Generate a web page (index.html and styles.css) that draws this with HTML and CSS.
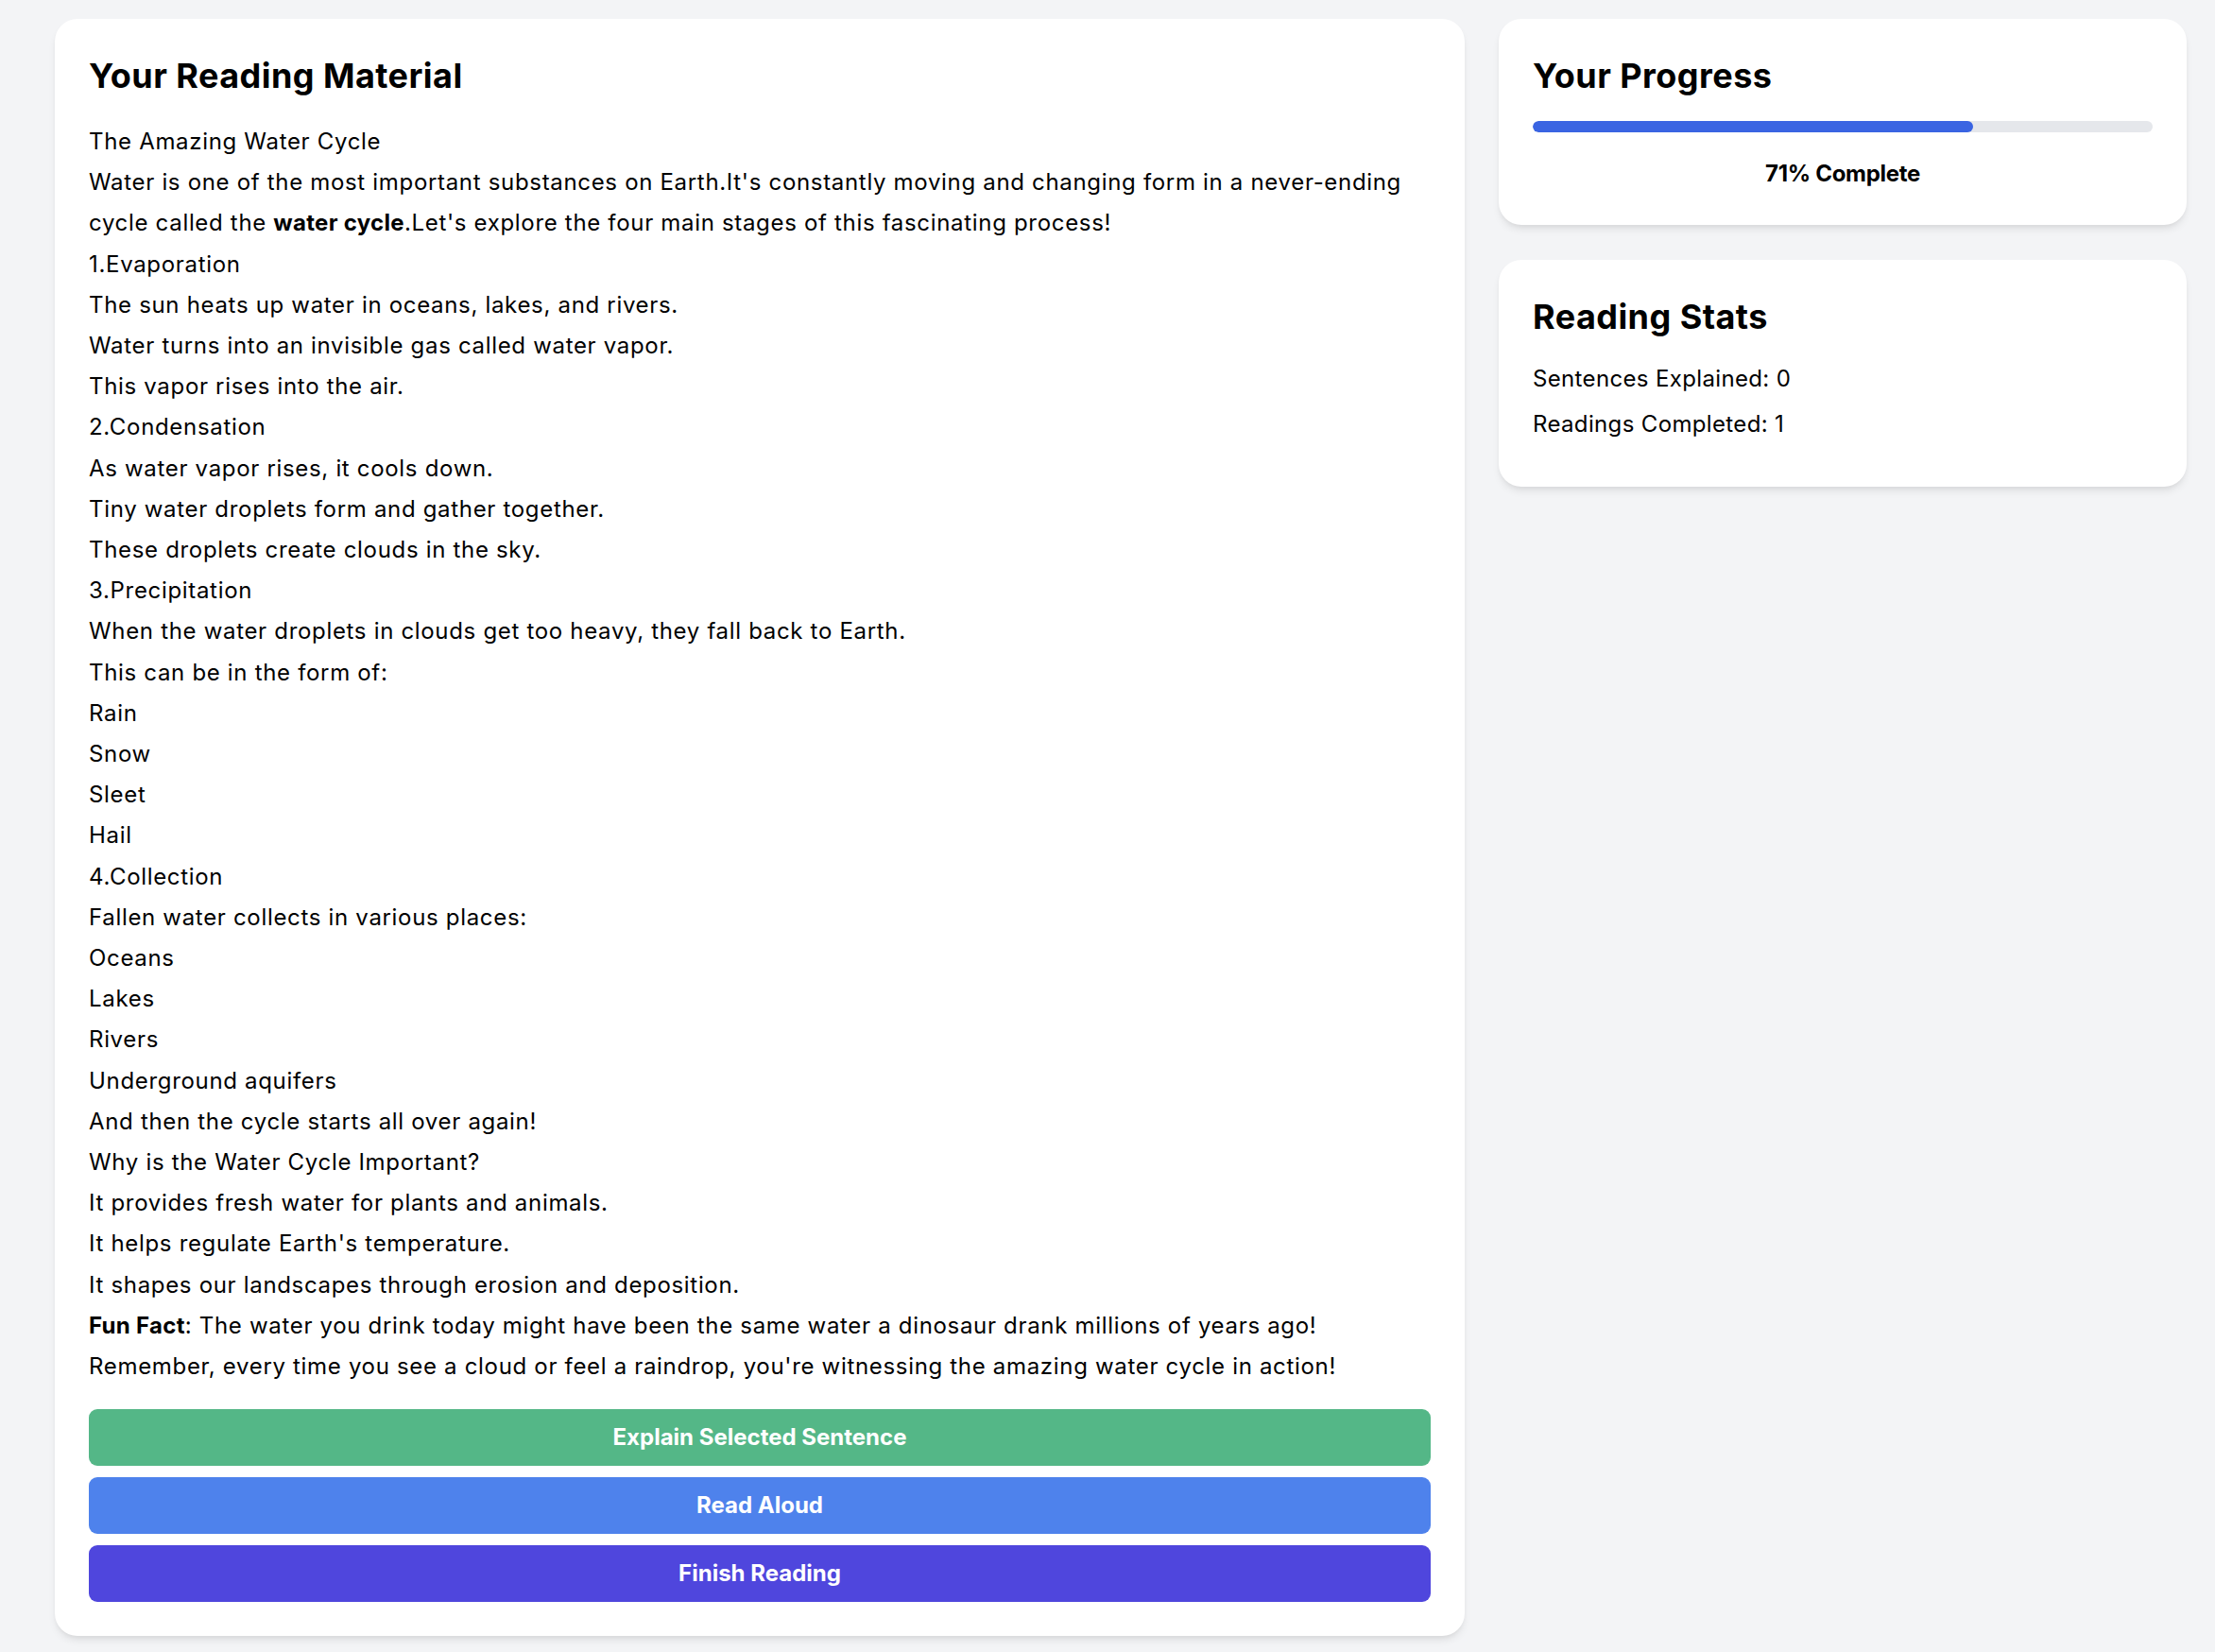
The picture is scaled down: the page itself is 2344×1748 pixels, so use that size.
FILE: index.html
```html
<!DOCTYPE html>
<html lang="en">
<head>
<meta charset="utf-8">
<title>Reading</title>
<link rel="stylesheet" href="styles.css">
</head>
<body>
<div class="layout">
  <main class="card reading">
    <h2 class="card-title">Your Reading Material</h2>
    <div class="material">
      <p>The Amazing Water Cycle</p>
      <p>Water is one of the most important substances on Earth.It's constantly moving and changing form in a never-ending cycle called the <strong>water cycle</strong>.Let's explore the four main stages of this fascinating process!</p>
      <p>1.Evaporation</p>
      <p>The sun heats up water in oceans, lakes, and rivers.</p>
      <p>Water turns into an invisible gas called water vapor.</p>
      <p>This vapor rises into the air.</p>
      <p>2.Condensation</p>
      <p>As water vapor rises, it cools down.</p>
      <p>Tiny water droplets form and gather together.</p>
      <p>These droplets create clouds in the sky.</p>
      <p>3.Precipitation</p>
      <p>When the water droplets in clouds get too heavy, they fall back to Earth.</p>
      <p>This can be in the form of:</p>
      <p>Rain</p>
      <p>Snow</p>
      <p>Sleet</p>
      <p>Hail</p>
      <p>4.Collection</p>
      <p>Fallen water collects in various places:</p>
      <p>Oceans</p>
      <p>Lakes</p>
      <p>Rivers</p>
      <p>Underground aquifers</p>
      <p>And then the cycle starts all over again!</p>
      <p>Why is the Water Cycle Important?</p>
      <p>It provides fresh water for plants and animals.</p>
      <p>It helps regulate Earth's temperature.</p>
      <p>It shapes our landscapes through erosion and deposition.</p>
      <p><strong>Fun Fact</strong>: The water you drink today might have been the same water a dinosaur drank millions of years ago!</p>
      <p>Remember, every time you see a cloud or feel a raindrop, you're witnessing the amazing water cycle in action!</p>
    </div>
    <div class="actions">
      <button class="btn btn-green">Explain Selected Sentence</button>
      <button class="btn btn-blue">Read Aloud</button>
      <button class="btn btn-indigo">Finish Reading</button>
    </div>
  </main>
  <aside class="sidebar">
    <section class="card">
      <h2 class="card-title">Your Progress</h2>
      <div class="track"><div class="fill" style="width:71%"></div></div>
      <p class="progress-label">71% Complete</p>
    </section>
    <section class="card">
      <h2 class="card-title">Reading Stats</h2>
      <p class="stat">Sentences Explained: 0</p>
      <p class="stat">Readings Completed: 1</p>
    </section>
  </aside>
</div>
</body>
</html>
```

FILE: styles.css
```css
* { box-sizing: border-box; }
html, body { margin: 0; padding: 0; }
body {
  background: #f3f4f6;
  font-family: "Inter", "Noto Sans", sans-serif;
  color: #000;
}
.layout {
  display: grid;
  grid-template-columns: minmax(0, 1492fr) minmax(0, 728fr);
  column-gap: 36px;
  align-items: start;
  padding: 20px 30px 18px 58px;
}
.card {
  background: #fff;
  border-radius: 24px;
  padding: 36px;
  box-shadow: 0 6px 10px -2px rgba(0,0,0,0.09), 0 3px 6px -3px rgba(0,0,0,0.08);
}
.card-title {
  margin: 0 0 24px;
  font-size: 36px;
  line-height: 48px;
  font-weight: 700;
  letter-spacing: 0.45px;
}
.material p {
  margin: 0;
  font-size: 24px;
  line-height: 43.2px;
  letter-spacing: 0.68px;
}
.material strong { font-weight: 700; letter-spacing: 0.3px; }
.actions {
  display: flex;
  flex-direction: column;
  gap: 12px;
  margin-top: 24px;
}
.btn {
  display: block;
  width: 100%;
  height: 60px;
  border: 0;
  border-radius: 9px;
  color: #fff;
  font-family: "Inter", "Noto Sans", sans-serif;
  font-size: 24px;
  font-weight: 700;
  line-height: 36px;
  letter-spacing: 0px;
  padding: 12px;
  cursor: pointer;
}
.btn-green { background: #54b787; }
.btn-blue { background: #4e82ec; }
.btn-indigo { background: #4f46dd; }
.sidebar {
  display: flex;
  flex-direction: column;
  gap: 37px;
}
.track {
  height: 12px;
  border-radius: 999px;
  background: #e5e7eb;
  overflow: hidden;
}
.fill {
  height: 100%;
  border-radius: 999px;
  background: #3a64e2;
}
.progress-label {
  margin: 26px 0 0;
  text-align: center;
  font-size: 24px;
  line-height: 36px;
  font-weight: 700;
  letter-spacing: -0.3px;
}
.stat {
  margin: 0 0 12px;
  font-size: 24px;
  line-height: 36px;
  letter-spacing: 0.35px;
}
```
